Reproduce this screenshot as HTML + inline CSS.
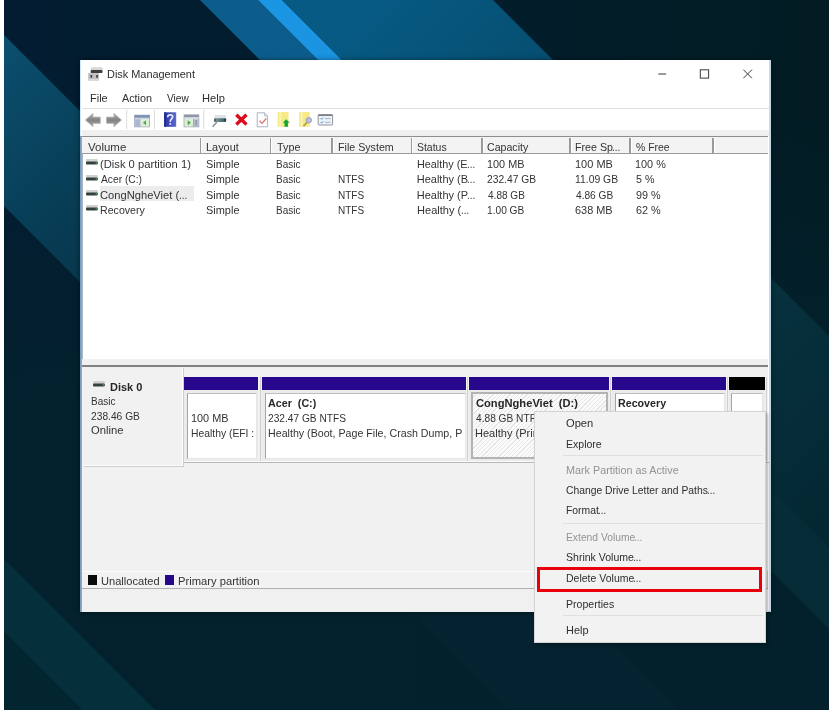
<!DOCTYPE html>
<html>
<head>
<meta charset="utf-8">
<title>Disk Management</title>
<style>
*{box-sizing:border-box;margin:0;padding:0}
html,body{width:831px;height:716px;overflow:hidden;background:#fff}
body{font-family:"Liberation Sans",sans-serif;font-size:11px;color:#2b2b2b;position:relative}
.abs{position:absolute}
#all{position:absolute;left:0;top:0;width:831px;height:716px;filter:blur(.35px)}
svg{position:absolute;overflow:visible}
#bg{position:absolute;left:4px;top:0;width:825px;height:710px;overflow:hidden}
.t{position:absolute;white-space:pre;line-height:14px;transform-origin:0 50%}
</style>
</head>
<body>
<div id="all">
<div id="bg">
<svg style="left:0;top:0" width="825" height="710" viewBox="4 0 825 710">
<defs>
<linearGradient id="gd" gradientUnits="userSpaceOnUse" x1="0" y1="0" x2="831" y2="0"><stop offset="0" stop-color="#031c31"/><stop offset=".45" stop-color="#031d2e"/><stop offset="1" stop-color="#031c23"/></linearGradient>
<linearGradient id="gv" gradientUnits="userSpaceOnUse" x1="0" y1="120" x2="0" y2="420"><stop offset="0" stop-color="#03222e" stop-opacity="0"/><stop offset="1" stop-color="#03212d" stop-opacity=".92"/></linearGradient>
<linearGradient id="gl" gradientUnits="userSpaceOnUse" x1="0" y1="40" x2="330" y2="370"><stop offset="0" stop-color="#0b4f6f"/><stop offset=".3" stop-color="#083f58"/><stop offset="1" stop-color="#04222f"/></linearGradient>
<linearGradient id="gm" gradientUnits="userSpaceOnUse" x1="230" y1="0" x2="650" y2="420"><stop offset="0" stop-color="#0c5d8c"/><stop offset=".25" stop-color="#0c5c8a"/><stop offset=".8" stop-color="#052c37"/></linearGradient>
<linearGradient id="gb" gradientUnits="userSpaceOnUse" x1="270" y1="0" x2="690" y2="420"><stop offset="0" stop-color="#1b96e4"/><stop offset=".25" stop-color="#1a90dc"/><stop offset=".8" stop-color="#052c37"/></linearGradient>
<linearGradient id="gr" gradientUnits="userSpaceOnUse" x1="380" y1="0" x2="900" y2="520"><stop offset="0" stop-color="#075a84"/><stop offset=".2" stop-color="#064f72"/><stop offset=".62" stop-color="#06323f"/><stop offset="1" stop-color="#042630"/></linearGradient>
</defs>
<rect x="0" y="0" width="831" height="716" fill="url(#gd)"/>
<rect x="0" y="0" width="831" height="716" fill="url(#gv)"/>
<polygon points="0,31 0,202 520,722 691,722" fill="url(#gl)"/>
<polygon points="200,0 258,0 974,716 916,716" fill="url(#gm)"/>
<polygon points="258,0 282,0 998,716 974,716" fill="url(#gb)"/>
<polygon points="282,0 493,0 1209,716 998,716" fill="url(#gr)"/>
<polygon points="0,555 0,628 88,716 161,716" fill="#042f3b"/>
<polygon points="0,628 0,716 88,716" fill="#03252f"/>
</svg>
</div>
<div class="abs" style="left:80px;top:59.6px;width:690.5px;height:552.6px;background:#fff;box-shadow:0 0 5px rgba(0,0,0,.45);border-left:1.500px solid #cfe6f6;border-right:2px solid #c3daee;border-bottom:1px solid #9fc0dc"></div>
<svg style="left:88px;top:67px" width="15" height="14" viewBox="0 0 15 14"><rect x="2.700" y=".2" width="11.800" height="3.400" rx=".8" fill="#d6d6d6"/><rect x="2.700" y="3" width="11.800" height="3" rx=".8" fill="#3a4141"/><rect x=".1" y="6.100" width="10.900" height="7.500" rx=".6" fill="#c2c2c4"/><rect x="2.500" y="8" width="1.700" height="2.800" rx=".5" fill="#3c3c40"/><rect x="8.200" y="8" width="1.700" height="2.800" rx=".5" fill="#3c3c40"/><rect x=".1" y="12" width="10.900" height="1.600" fill="#d8d8da"/></svg>
<div class="t" style="left:106.63px;top:66.5px;font-size:11.5px;color:#2e2e2e;transform:scaleX(0.949);">Disk Management</div>
<svg style="left:650px;top:64px" width="110" height="20" viewBox="650 64 110 20"><path d="M658.300 74H666.200" stroke="#3a3a3a" stroke-width="1"/><rect x="700.300" y="69.800" width="8.300" height="8.300" fill="none" stroke="#3a3a3a" stroke-width="1"/><path d="M743.400 69.700L751.900 78.200M751.900 69.700L743.400 78.200" stroke="#3a3a3a" stroke-width="1"/></svg>
<div class="t" style="left:89.62px;top:91.0px;font-size:11.5px;color:#2e2e2e;transform:scaleX(0.954);">File</div>
<div class="t" style="left:121.80px;top:91.0px;font-size:11.5px;color:#2e2e2e;transform:scaleX(0.938);">Action</div>
<div class="t" style="left:166.55px;top:91.0px;font-size:11.5px;color:#2e2e2e;transform:scaleX(0.880);">View</div>
<div class="t" style="left:201.81px;top:91.0px;font-size:11.5px;color:#2e2e2e;transform:scaleX(0.966);">Help</div>
<div class="abs" style="left:82px;top:108px;width:687px;height:1px;background:#dedede;"></div>
<div class="abs" style="left:82px;top:130px;width:687px;height:6px;background:#f0f0f0;"></div>
<svg style="left:82px;top:109px" width="260" height="21" viewBox="82 109 260 21">
<defs>
<linearGradient id="hg" x1="0" y1="0" x2="1" y2="0"><stop offset="0" stop-color="#2a33a0"/><stop offset=".55" stop-color="#4450bd"/><stop offset="1" stop-color="#5f6bd0"/></linearGradient>
<linearGradient id="ag" x1="0" y1="0" x2="0" y2="1"><stop offset="0" stop-color="#b4b4b4"/><stop offset=".5" stop-color="#828282"/><stop offset="1" stop-color="#a8a8a8"/></linearGradient>
<linearGradient id="pg" x1="0" y1="0" x2="1" y2="0"><stop offset="0" stop-color="#7f979c"/><stop offset=".45" stop-color="#5d7f80"/><stop offset="1" stop-color="#3b5c57"/></linearGradient>
</defs>
<!-- back / forward arrows -->
<path d="M85.400 120L93 113.300V117.100H100.300V123.400H93V126.800Z" fill="url(#ag)" stroke="#b9b9b9" stroke-width=".8" stroke-linejoin="round"/>
<path d="M121.500 120L113.900 113.300V117.100H106.500V123.400H113.900V126.800Z" fill="url(#ag)" stroke="#b9b9b9" stroke-width=".8" stroke-linejoin="round"/>
<rect x="126.200" y="110" width="1" height="19" fill="#dcdcdc"/>
<!-- show/hide console tree -->
<rect x="134.700" y="115.200" width="14.700" height="11.600" fill="#eef2f4" stroke="#97a0b4" stroke-width=".9"/>
<rect x="134.700" y="115.200" width="14.700" height="2.600" fill="#7c8cb2"/>
<rect x="134.700" y="117.800" width="14.700" height="1.200" fill="#c9d0de"/>
<rect x="135.200" y="119.200" width="4.400" height="7.200" fill="#aab6d6"/>
<rect x="139.600" y="119" width=".8" height="7.600" fill="#8c96ae"/>
<rect x="140.600" y="119.400" width="8.300" height="7" fill="#dcefd4"/>
<path d="M146 120.300V125.300L143 122.800Z" fill="#4fa24f"/>
<rect x="154" y="110" width="1" height="19" fill="#dcdcdc"/>
<!-- help -->
<rect x="164.200" y="112.300" width="12" height="14.500" fill="url(#hg)"/>
<rect x="164.200" y="112.300" width="1.600" height="14.500" fill="#232a8c"/>
<path d="M167.800 116.600C167.800 114.300 172.700 114.100 172.700 116.800C172.700 118.700 170.300 118.900 170.300 121.200" fill="none" stroke="#e6e8fb" stroke-width="1.700" stroke-linecap="round"/>
<circle cx="170.300" cy="124" r="1.050" fill="#e6e8fb"/>
<!-- action pane -->
<rect x="184.100" y="114.900" width="14.700" height="11.900" fill="#eef2f4" stroke="#9aa0ac" stroke-width=".9"/>
<rect x="184.100" y="114.900" width="14.700" height="2.400" fill="#8e96a6"/>
<rect x="184.100" y="117.300" width="14.700" height="1.300" fill="#cfd4dc"/>
<rect x="184.700" y="119.200" width="8.200" height="7.200" fill="#d9efd0"/>
<path d="M187.700 120.300V125.300L190.900 122.800Z" fill="#4aa24a"/>
<rect x="193.100" y="119" width=".8" height="7.600" fill="#8c96ae"/>
<rect x="194" y="119.200" width="4.400" height="7.200" fill="#b4bcd4"/>
<rect x="195.600" y="120" width="1" height="5.600" fill="#7f88a4"/>
<rect x="203.200" y="110" width="1" height="19" fill="#dcdcdc"/>
<!-- plug / connect -->
<path d="M216.800 122.200L212.600 126.800" stroke="#8a8c8c" stroke-width="1.400" fill="none"/>
<rect x="214.600" y="114.900" width="11.200" height="4" rx=".8" fill="#dde2e5"/>
<rect x="214.300" y="118.200" width="11.800" height="3.800" rx="1.300" fill="url(#pg)"/>
<rect x="214.300" y="118.400" width="1.300" height="3.400" rx=".6" fill="#2f4440"/>
<rect x="224.300" y="118.400" width="1.800" height="3.400" rx=".8" fill="#2b423d"/>
<!-- red X -->
<path d="M236.300 114.700L246.500 124.500M246.500 114.700L236.300 124.500" stroke="#dc0c1c" stroke-width="3.300" stroke-linecap="butt"/>
<!-- doc with check -->
<path d="M257.200 112.800H264.600L267.600 115.800V126.800H257.200Z" fill="#fdfdfd" stroke="#a4acba" stroke-width=".9"/>
<path d="M264.600 112.800V115.800H267.600" fill="#e4e8ee" stroke="#a4acba" stroke-width=".8"/>
<path d="M259.600 120.800L262 123.400L266.300 118.500" fill="none" stroke="#d97474" stroke-width="1.300"/>
<!-- yellow doc + green arrow -->
<rect x="277.700" y="112" width="10.800" height="14.800" fill="#f6ea86"/>
<rect x="279.200" y="112" width="2.200" height="14.800" fill="#fbf3b0"/>
<path d="M286.200 119.300L289.700 122.700H287.900V126.800H284.500V122.700H282.700Z" fill="#12a636"/>
<!-- yellow doc + magnifier -->
<rect x="299.100" y="112" width="10.600" height="14.800" fill="#f6ea86"/>
<rect x="300.600" y="112" width="2.200" height="14.800" fill="#fbf3b0"/>
<path d="M307 122.200L303.400 126.200" stroke="#a8a046" stroke-width="1.700"/>
<circle cx="308.800" cy="120.200" r="2.700" fill="#b9bbe6" stroke="#9aa0b8" stroke-width="1"/>
<!-- properties -->
<rect x="318.200" y="114.600" width="14.400" height="10.400" rx=".8" fill="#eaf2fa" stroke="#8a8a92" stroke-width=".9"/>
<rect x="318.200" y="114.600" width="14.400" height="1.400" fill="#7c7c86"/>
<path d="M320.600 118.300L321.600 119.400L323.300 117.500M320.600 122L321.600 123.100L323.300 121.200" fill="none" stroke="#5a86cc" stroke-width=".9"/>
<path d="M325 118.600H330.500M325 122.300H330.500" stroke="#a4acbc" stroke-width=".9"/>
</svg>
<div class="abs" style="left:80.3px;top:135.5px;width:2.4px;height:476.7px;background:linear-gradient(90deg,#7593b1,#a9bfd4);"></div>
<div class="abs" style="left:82px;top:135.5px;width:686px;height:2px;background:#8e8e8e;"></div>
<div class="abs" style="left:82px;top:137px;width:686px;height:16px;background:#f3f3f3;"></div>
<div class="abs" style="left:82px;top:153px;width:686px;height:1px;background:#9c9c9c;"></div>
<div class="abs" style="left:199.5px;top:137.5px;width:1.5px;height:15.5px;background:#9a9a9a;"></div>
<div class="abs" style="left:201.0px;top:137px;width:1px;height:16px;background:#fff;"></div>
<div class="abs" style="left:269.5px;top:137.5px;width:1.5px;height:15.5px;background:#9a9a9a;"></div>
<div class="abs" style="left:271.0px;top:137px;width:1px;height:16px;background:#fff;"></div>
<div class="abs" style="left:331px;top:137.5px;width:1.5px;height:15.5px;background:#9a9a9a;"></div>
<div class="abs" style="left:332.5px;top:137px;width:1px;height:16px;background:#fff;"></div>
<div class="abs" style="left:410.5px;top:137.5px;width:1.5px;height:15.5px;background:#9a9a9a;"></div>
<div class="abs" style="left:412.0px;top:137px;width:1px;height:16px;background:#fff;"></div>
<div class="abs" style="left:481px;top:137.5px;width:1.5px;height:15.5px;background:#9a9a9a;"></div>
<div class="abs" style="left:482.5px;top:137px;width:1px;height:16px;background:#fff;"></div>
<div class="abs" style="left:569.3px;top:137.5px;width:1.5px;height:15.5px;background:#9a9a9a;"></div>
<div class="abs" style="left:570.8px;top:137px;width:1px;height:16px;background:#fff;"></div>
<div class="abs" style="left:629.3px;top:137.5px;width:1.5px;height:15.5px;background:#9a9a9a;"></div>
<div class="abs" style="left:630.8px;top:137px;width:1px;height:16px;background:#fff;"></div>
<div class="abs" style="left:712.3px;top:137.5px;width:1.5px;height:15.5px;background:#9a9a9a;"></div>
<div class="abs" style="left:713.8px;top:137px;width:1px;height:16px;background:#fff;"></div>
<div class="t" style="left:88.14px;top:140.1px;font-size:11px;color:#333;transform:scaleX(1.043);">Volume</div>
<div class="t" style="left:205.83px;top:140.1px;font-size:11px;color:#333;transform:scaleX(0.992);">Layout</div>
<div class="t" style="left:276.68px;top:140.1px;font-size:11px;color:#333;transform:scaleX(0.983);">Type</div>
<div class="t" style="left:337.55px;top:140.1px;font-size:11px;color:#333;transform:scaleX(0.970);">File System</div>
<div class="t" style="left:417.13px;top:140.1px;font-size:11px;color:#333;transform:scaleX(0.950);">Status</div>
<div class="t" style="left:487.47px;top:140.1px;font-size:11px;color:#333;transform:scaleX(0.964);">Capacity</div>
<div class="t" style="left:575.05px;top:140.1px;font-size:11px;color:#333;transform:scaleX(0.969);">Free Sp</div>
<div class="t" style="left:612.43px;top:140.1px;font-size:11px;color:#333;transform:scaleX(0.881);">...</div>
<div class="t" style="left:635.94px;top:140.1px;font-size:11px;color:#333;transform:scaleX(0.947);">% Free</div>
<div class="abs" style="left:100px;top:186px;width:94px;height:15px;background:#ececec;"></div>
<svg style="left:86px;top:159.1px" width="12" height="6" viewBox="0 0 12 6"><rect x="0" y="0" width="11.800" height="3" rx=".8" fill="#cfd2cf"/><rect x="0" y="2.500" width="11.800" height="3" rx=".9" fill="#34403b"/><rect x="9.600" y="3.200" width="1.300" height="1.400" fill="#4fae62"/></svg>
<div class="t" style="left:100.33px;top:156.8px;font-size:11px;color:#333;transform:scaleX(1.018);">(Disk 0 partition 1)</div>
<div class="t" style="left:206.21px;top:156.8px;font-size:11px;color:#333;transform:scaleX(0.996);">Simple</div>
<div class="t" style="left:275.90px;top:156.8px;font-size:11px;color:#333;transform:scaleX(0.909);">Basic</div>
<div class="t" style="left:416.73px;top:156.8px;font-size:11px;color:#333;transform:scaleX(0.984);">Healthy (E</div>
<div class="t" style="left:466.73px;top:156.8px;font-size:11px;color:#333;transform:scaleX(0.881);">...</div>
<div class="t" style="left:487.18px;top:156.8px;font-size:11px;color:#333;transform:scaleX(0.988);">100 MB</div>
<div class="t" style="left:575.08px;top:156.8px;font-size:11px;color:#333;transform:scaleX(0.999);">100 MB</div>
<div class="t" style="left:635.49px;top:156.8px;font-size:11px;color:#333;transform:scaleX(0.987);">100 %</div>
<svg style="left:86px;top:174.5px" width="12" height="6" viewBox="0 0 12 6"><rect x="0" y="0" width="11.800" height="3" rx=".8" fill="#cfd2cf"/><rect x="0" y="2.500" width="11.800" height="3" rx=".9" fill="#34403b"/><rect x="9.600" y="3.200" width="1.300" height="1.400" fill="#4fae62"/></svg>
<div class="t" style="left:101.00px;top:172.2px;font-size:11px;color:#333;transform:scaleX(0.931);">Acer (C:)</div>
<div class="t" style="left:206.21px;top:172.2px;font-size:11px;color:#333;transform:scaleX(0.996);">Simple</div>
<div class="t" style="left:275.90px;top:172.2px;font-size:11px;color:#333;transform:scaleX(0.909);">Basic</div>
<div class="t" style="left:337.60px;top:172.2px;font-size:11px;color:#333;transform:scaleX(0.911);">NTFS</div>
<div class="t" style="left:416.72px;top:172.2px;font-size:11px;color:#333;transform:scaleX(1.000);">Healthy (B</div>
<div class="t" style="left:467.43px;top:172.2px;font-size:11px;color:#333;transform:scaleX(0.881);">...</div>
<div class="t" style="left:487.49px;top:172.2px;font-size:11px;color:#333;transform:scaleX(0.932);">232.47 GB</div>
<div class="t" style="left:575.12px;top:172.2px;font-size:11px;color:#333;transform:scaleX(0.944);">11.09 GB</div>
<div class="t" style="left:635.87px;top:172.2px;font-size:11px;color:#333;transform:scaleX(0.975);">5 %</div>
<svg style="left:86px;top:189.9px" width="12" height="6" viewBox="0 0 12 6"><rect x="0" y="0" width="11.800" height="3" rx=".8" fill="#cfd2cf"/><rect x="0" y="2.500" width="11.800" height="3" rx=".9" fill="#34403b"/><rect x="9.600" y="3.200" width="1.300" height="1.400" fill="#4fae62"/></svg>
<div class="t" style="left:100.44px;top:187.6px;font-size:11px;color:#333;transform:scaleX(1.014);">CongNgheViet (</div>
<div class="t" style="left:179.43px;top:187.6px;font-size:11px;color:#333;transform:scaleX(0.881);">...</div>
<div class="t" style="left:206.21px;top:187.6px;font-size:11px;color:#333;transform:scaleX(0.996);">Simple</div>
<div class="t" style="left:275.90px;top:187.6px;font-size:11px;color:#333;transform:scaleX(0.909);">Basic</div>
<div class="t" style="left:337.60px;top:187.6px;font-size:11px;color:#333;transform:scaleX(0.911);">NTFS</div>
<div class="t" style="left:416.72px;top:187.6px;font-size:11px;color:#333;transform:scaleX(1.000);">Healthy (P</div>
<div class="t" style="left:467.43px;top:187.6px;font-size:11px;color:#333;transform:scaleX(0.881);">...</div>
<div class="t" style="left:487.80px;top:187.6px;font-size:11px;color:#333;transform:scaleX(0.913);">4.88 GB</div>
<div class="t" style="left:575.70px;top:187.6px;font-size:11px;color:#333;transform:scaleX(0.923);">4.86 GB</div>
<div class="t" style="left:635.81px;top:187.6px;font-size:11px;color:#333;transform:scaleX(0.983);">99 %</div>
<svg style="left:86px;top:205.2px" width="12" height="6" viewBox="0 0 12 6"><rect x="0" y="0" width="11.800" height="3" rx=".8" fill="#cfd2cf"/><rect x="0" y="2.500" width="11.800" height="3" rx=".9" fill="#34403b"/><rect x="9.600" y="3.200" width="1.300" height="1.400" fill="#4fae62"/></svg>
<div class="t" style="left:100.15px;top:202.9px;font-size:11px;color:#333;transform:scaleX(0.965);">Recovery</div>
<div class="t" style="left:206.21px;top:202.9px;font-size:11px;color:#333;transform:scaleX(0.996);">Simple</div>
<div class="t" style="left:275.90px;top:202.9px;font-size:11px;color:#333;transform:scaleX(0.909);">Basic</div>
<div class="t" style="left:337.60px;top:202.9px;font-size:11px;color:#333;transform:scaleX(0.911);">NTFS</div>
<div class="t" style="left:416.72px;top:202.9px;font-size:11px;color:#333;transform:scaleX(1.005);">Healthy (</div>
<div class="t" style="left:460.83px;top:202.9px;font-size:11px;color:#333;transform:scaleX(0.881);">...</div>
<div class="t" style="left:487.24px;top:202.9px;font-size:11px;color:#333;transform:scaleX(0.924);">1.00 GB</div>
<div class="t" style="left:575.35px;top:202.9px;font-size:11px;color:#333;transform:scaleX(0.992);">638 MB</div>
<div class="t" style="left:635.76px;top:202.9px;font-size:11px;color:#333;transform:scaleX(0.986);">62 %</div>
<div class="abs" style="left:82px;top:359px;width:686px;height:253px;background:#f0f0f0;"></div>
<div class="abs" style="left:82px;top:365px;width:686px;height:2px;background:#828282;"></div>
<div class="abs" style="left:82px;top:367px;width:686px;height:204px;background:#f1f1f1;"></div>
<div class="abs" style="left:83px;top:367px;width:100px;height:98.5px;background:#f1f1f1;border-right:1.500px solid #fdfdfd;border-bottom:1.500px solid #fdfdfd;box-shadow:1px 1px 0 #cdcdcd"></div>
<svg style="left:93.400px;top:380.600px" width="12" height="6" viewBox="0 0 12 6"><rect x="0" y="0" width="11.800" height="3" rx=".8" fill="#cfd2cf"/><rect x="0" y="2.500" width="11.800" height="3" rx=".9" fill="#34403b"/><rect x="9.600" y="3.200" width="1.300" height="1.400" fill="#4fae62"/></svg>
<div class="t" style="left:109.89px;top:379.6px;font-size:11px;color:#262626;transform:scaleX(0.996);font-weight:700;">Disk 0</div>
<div class="t" style="left:90.70px;top:394.2px;font-size:11px;color:#333;transform:scaleX(0.909);">Basic</div>
<div class="t" style="left:90.99px;top:408.8px;font-size:11px;color:#333;transform:scaleX(0.930);">238.46 GB</div>
<div class="t" style="left:90.99px;top:423.4px;font-size:11px;color:#333;transform:scaleX(1.023);">Online</div>
<div class="abs" style="left:183.5px;top:461.3px;width:585px;height:1px;background:#fafafa;"></div>
<div class="abs" style="left:183.5px;top:462.3px;width:585px;height:1.2px;background:#b8b8b8;"></div>
<div class="abs" style="left:184.3px;top:377.2px;width:74.0px;height:12.6px;background:#27078b;"></div>
<div class="abs" style="left:184.3px;top:389.8px;width:74.0px;height:71.2px;background:#ebebeb;"></div>
<div class="abs" style="left:187px;top:392.6px;width:70px;height:66.6px;background:#fff;border-left:1px solid #a4a4a4;border-top:1px solid #bebebe;border-right:1px solid #e6e6e6;border-bottom:1px solid #e6e6e6"></div>
<div class="abs" style="left:259.5px;top:377.2px;width:1px;height:84px;background:#cfcfcf;"></div>
<div class="abs" style="left:261.5px;top:377.2px;width:204.5px;height:12.6px;background:#27078b;"></div>
<div class="abs" style="left:261.5px;top:389.8px;width:204.5px;height:71.2px;background:#ebebeb;"></div>
<div class="abs" style="left:264.5px;top:392.6px;width:201.10000000000002px;height:66.6px;background:#fff;border-left:1px solid #a4a4a4;border-top:1px solid #bebebe;border-right:1px solid #e6e6e6;border-bottom:1px solid #e6e6e6"></div>
<div class="abs" style="left:467.2px;top:377.2px;width:1px;height:84px;background:#cfcfcf;"></div>
<div class="abs" style="left:469px;top:377.2px;width:139.79999999999995px;height:12.6px;background:#27078b;"></div>
<div class="abs" style="left:469px;top:389.8px;width:139.79999999999995px;height:71.2px;background:#ebebeb;"></div>
<div class="abs" style="left:471.4px;top:392.3px;width:136.80000000000007px;height:66.8px;background:#fff;border:2px solid #b3b3b3;background:repeating-linear-gradient(135deg,#fbfbfb 0,#fbfbfb 2.100px,#e6e6e6 2.100px,#e6e6e6 3px)"></div>
<div class="abs" style="left:610.0px;top:377.2px;width:1px;height:84px;background:#cfcfcf;"></div>
<div class="abs" style="left:612.2px;top:377.2px;width:113.39999999999998px;height:12.6px;background:#27078b;"></div>
<div class="abs" style="left:612.2px;top:389.8px;width:113.39999999999998px;height:71.2px;background:#ebebeb;"></div>
<div class="abs" style="left:615.2px;top:392.6px;width:110.0px;height:66.6px;background:#fff;border-left:1px solid #a4a4a4;border-top:1px solid #bebebe;border-right:1px solid #e6e6e6;border-bottom:1px solid #e6e6e6"></div>
<div class="abs" style="left:726.8000000000001px;top:377.2px;width:1px;height:84px;background:#cfcfcf;"></div>
<div class="abs" style="left:728.7px;top:377.2px;width:35.89999999999998px;height:12.6px;background:#000;"></div>
<div class="abs" style="left:728.7px;top:389.8px;width:35.89999999999998px;height:71.2px;background:#ebebeb;"></div>
<div class="abs" style="left:731.4px;top:392.6px;width:32.0px;height:66.6px;background:#fff;border-left:1px solid #a4a4a4;border-top:1px solid #bebebe;border-right:1px solid #e6e6e6;border-bottom:1px solid #e6e6e6"></div>
<div class="abs" style="left:765.8000000000001px;top:377.2px;width:1px;height:84px;background:#cfcfcf;"></div>
<div class="t" style="left:191.08px;top:411.0px;font-size:11px;color:#333;transform:scaleX(0.988);">100 MB</div>
<div class="t" style="left:191.07px;top:425.5px;font-size:11px;color:#333;transform:scaleX(0.940);">Healthy (EFI :</div>
<div class="t" style="left:268.23px;top:395.8px;font-size:11px;color:#262626;transform:scaleX(0.975);font-weight:700;">Acer  (C:)</div>
<div class="t" style="left:267.99px;top:411.0px;font-size:11px;color:#333;transform:scaleX(0.924);">232.47 GB NTFS</div>
<div class="t" style="left:267.65px;top:425.5px;font-size:11px;color:#333;transform:scaleX(0.969);">Healthy (Boot, Page File, Crash Dump, P</div>
<div class="t" style="left:475.65px;top:395.8px;font-size:11px;color:#262626;transform:scaleX(1.014);font-weight:700;">CongNgheViet  (D:)</div>
<div class="t" style="left:475.90px;top:411.0px;font-size:11px;color:#333;transform:scaleX(0.924);">4.88 GB NTFS</div>
<div class="t" style="left:475.22px;top:425.5px;font-size:11px;color:#333;transform:scaleX(1.004);">Healthy (Primary Partition)</div>
<div class="t" style="left:618.31px;top:395.8px;font-size:11px;color:#262626;transform:scaleX(0.971);font-weight:700;">Recovery</div>
<div class="abs" style="left:82px;top:571px;width:686px;height:1px;background:#fcfcfc;"></div>
<div class="abs" style="left:82px;top:572px;width:686px;height:16px;background:#f2f2f2;"></div>
<div class="abs" style="left:82px;top:588px;width:686px;height:1.2px;background:#b0b0b0;"></div>
<div class="abs" style="left:82px;top:589.2px;width:686px;height:22.8px;background:#f0f0f0;"></div>
<div class="abs" style="left:88.2px;top:574.8px;width:9.2px;height:10.6px;background:#0a0a0a;"></div>
<div class="t" style="left:101.27px;top:573.6px;font-size:11px;color:#333;transform:scaleX(1.008);">Unallocated</div>
<div class="abs" style="left:165.2px;top:574.8px;width:9.2px;height:10.6px;background:#27078b;"></div>
<div class="t" style="left:178.20px;top:573.6px;font-size:11px;color:#333;transform:scaleX(1.018);">Primary partition</div>
<div class="abs" style="left:766.5px;top:571px;width:1px;height:17px;background:#c8c8c8;"></div>
<div class="abs" style="left:534px;top:410.5px;width:231.5px;height:232px;background:#f2f2f2;border:1px solid #d4d4d4;box-shadow:2px 2px 3px rgba(0,0,0,.25)"></div>
<div class="t" style="left:566.00px;top:416.4px;font-size:11px;color:#2e2e2e;transform:scaleX(1.012);">Open</div>
<div class="t" style="left:565.66px;top:436.6px;font-size:11px;color:#2e2e2e;transform:scaleX(0.958);">Explore</div>
<div class="abs" style="left:562.5px;top:455px;width:200px;height:1px;background:#e0e0e0;"></div>
<div class="t" style="left:565.64px;top:463.1px;font-size:11px;color:#939393;transform:scaleX(0.980);">Mark Partition as Active</div>
<div class="t" style="left:565.98px;top:483.0px;font-size:11px;color:#2e2e2e;transform:scaleX(0.939);">Change Drive Letter and Paths</div>
<div class="t" style="left:707.33px;top:483.0px;font-size:11px;color:#2e2e2e;transform:scaleX(0.881);">...</div>
<div class="t" style="left:565.67px;top:503.0px;font-size:11px;color:#2e2e2e;transform:scaleX(0.942);">Format</div>
<div class="t" style="left:598.33px;top:503.0px;font-size:11px;color:#2e2e2e;transform:scaleX(0.881);">...</div>
<div class="abs" style="left:562.5px;top:523.3px;width:200px;height:1px;background:#e0e0e0;"></div>
<div class="t" style="left:565.68px;top:530.0px;font-size:11px;color:#939393;transform:scaleX(0.937);">Extend Volume</div>
<div class="t" style="left:634.43px;top:530.0px;font-size:11px;color:#939393;transform:scaleX(0.881);">...</div>
<div class="t" style="left:566.03px;top:550.2px;font-size:11px;color:#2e2e2e;transform:scaleX(0.958);">Shrink Volume</div>
<div class="t" style="left:633.43px;top:550.2px;font-size:11px;color:#2e2e2e;transform:scaleX(0.881);">...</div>
<div class="t" style="left:565.66px;top:570.7px;font-size:11px;color:#2e2e2e;transform:scaleX(0.955);">Delete Volume</div>
<div class="t" style="left:633.43px;top:570.7px;font-size:11px;color:#2e2e2e;transform:scaleX(0.881);">...</div>
<div class="abs" style="left:562.5px;top:614.7px;width:200px;height:1px;background:#e0e0e0;"></div>
<div class="t" style="left:565.65px;top:596.7px;font-size:11px;color:#2e2e2e;transform:scaleX(0.961);">Properties</div>
<div class="t" style="left:565.62px;top:623.2px;font-size:11px;color:#2e2e2e;transform:scaleX(0.996);">Help</div>
<div class="abs" style="left:536.8px;top:567.4px;width:225.4px;height:24.4px;background:transparent;border:3.400px solid #e8000c"></div>
</div>
</body>
</html>
